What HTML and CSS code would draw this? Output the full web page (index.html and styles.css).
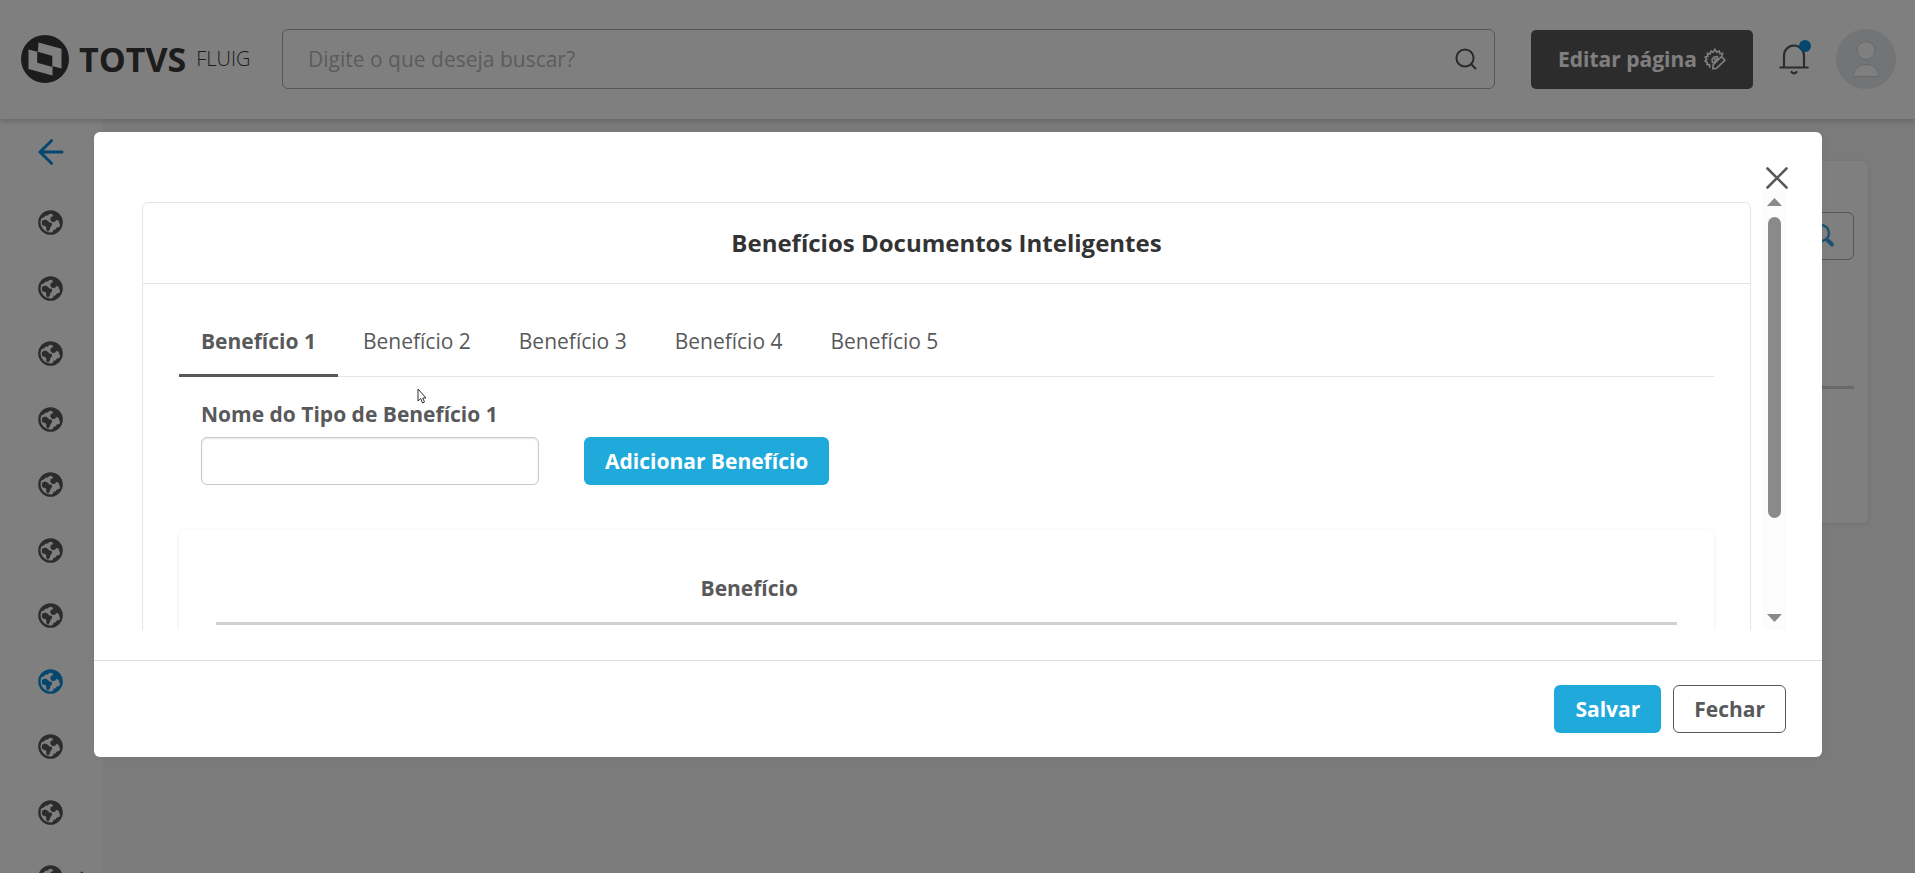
FILE: index.html
```html
<!DOCTYPE html>
<html lang="pt-BR">
<head>
<meta charset="utf-8">
<title>Benefícios Documentos Inteligentes</title>
<meta name="viewport" content="width=device-width, initial-scale=1">
<link rel="stylesheet" href="styles.css">
</head>
<body>
<svg class="symbols" aria-hidden="true">
  <symbol id="globe" viewBox="0 0 26 26">
    <circle cx="13" cy="13" r="11.6" fill="none" stroke="currentColor" stroke-width="2.400"/>
    <path fill="currentColor" d="M2.500 9 4.600 4.600 9 1.600l5-.6 5 1L22.500 5l2.300 4 .4 5-2 3-1-3.600-.8-2.300-2.400-.7-1.200 1.800-3.200.2-1.900-2.400.6-2.800 2.100-.8.2-1.200-2-1.200-1.800.2-1.600 1.500-2.600.3-1.200 1.500-2.100.9z"/>
    <path fill="currentColor" d="m4.200 11.200 3.200-1.200 3 1.100 1 1.700 3.200.8-.2 2.700-1.500 1.400-.4 2-2.200 3.300-1.800-2.700.2-2.400-1.600-1.400H5.200l-1.200-2zM14.800 24l1.500-3.400 2.200-.7 1-1.800 3.800-.8-2.700 4.500-2.800 2z"/>
  </symbol>
</svg>

<header class="topbar">
  <a class="brand" href="#">
    <svg class="brand-mark" viewBox="0 0 48 48" aria-hidden="true">
      <circle cx="24" cy="24" r="24" fill="#383838"/>
      <path fill="#fff" d="M17.500 7.600 40.500 13.800V33.600L32 31.300V20.600L17 16.200z"/>
      <path fill="#fff" d="M7.500 14.500 16.200 16.700V27.800L31.500 32V40.600L7.500 34z"/>
      <path fill="none" stroke="#fff" stroke-width="1" d="M16.500 16.200 31.800 20.500V31.800"/>
    </svg>
    <span class="brand-name">TOTVS</span>
    <span class="brand-product">FLUIG</span>
  </a>
  <form class="search">
    <input class="search-input" type="search" placeholder="Digite o que deseja buscar?" aria-label="Buscar">
    <button class="search-button" type="button" aria-label="Pesquisar">
      <svg width="22" height="22" viewBox="0 0 22 22" fill="none" stroke="currentColor" stroke-width="2" stroke-linecap="round"><circle cx="10" cy="10" r="8.600"/><path d="M16.200 16.200 20.500 20.500"/></svg>
    </button>
  </form>
  <button class="edit-button" type="button">Editar página
    <svg width="22" height="22" viewBox="0 0 22 22" fill="none" stroke="currentColor" stroke-width="1.600" stroke-linejoin="round" stroke-linecap="round" aria-hidden="true">
      <path d="M5.800 19.200 5.600 16.600 2.900 16.700 3.300 14.200 .9 13 2.900 11.200 1.200 9 3.900 8.300 3.300 5.400 6.200 5.900 6.900 3 9.200 4.400 11 1.200 12.700 4.300 15.400 2.900 15.800 5.800 18.800 5.300 18 7.600"/>
      <path d="M8.700 20.900 9.200 16.600 17.500 8.600 21 12.200 12.700 20.200zM13.500 8.500l-3.500.5-2 2.500.4 3 2-.5 3-3z"/>
      <circle cx="11.300" cy="11.300" r=".6"/>
    </svg>
  </button>
  <button class="bell" type="button" aria-label="Notificações">
    <svg width="30" height="32" viewBox="0 0 30 32" fill="none" stroke="currentColor" stroke-width="2.200" stroke-linecap="round" stroke-linejoin="round"><path d="M1.200 24.500H28.800M5 24.500V12.500a10 10 0 0 1 20 0V24.500M12.500 29q2.500 2.600 5 0"/></svg>
    <span class="bell-dot"></span>
  </button>
  <button class="avatar" type="button" aria-label="Perfil">
    <svg width="60" height="60" viewBox="0 0 60 60"><circle cx="30" cy="30" r="30" fill="#e4e8ec"/><g fill="#fff" stroke="#ccd0d4"><circle cx="30" cy="21.500" r="9"/><path d="M17.500 47.500c-1-16 26-16 25 0z"/></g></svg>
  </button>
</header>

<div class="shell">
  <nav class="sidebar" aria-label="Páginas">
    <a class="back" href="#" aria-label="Voltar"><svg width="26" height="26" viewBox="0 0 26 26" fill="none" stroke="currentColor" stroke-width="3" stroke-linecap="round" stroke-linejoin="round"><path d="M24 13H2M13.500 1.700 2 13 13.500 24.300"/></svg></a>
    <div class="pages">
      <a class="page" href="#" aria-label="Página 1"><svg><use href="#globe"/></svg></a>
      <a class="page" href="#" aria-label="Página 2"><svg><use href="#globe"/></svg></a>
      <a class="page" href="#" aria-label="Página 3"><svg><use href="#globe"/></svg></a>
      <a class="page" href="#" aria-label="Página 4"><svg><use href="#globe"/></svg></a>
      <a class="page" href="#" aria-label="Página 5"><svg><use href="#globe"/></svg></a>
      <a class="page" href="#" aria-label="Página 6"><svg><use href="#globe"/></svg></a>
      <a class="page" href="#" aria-label="Página 7"><svg><use href="#globe"/></svg></a>
      <a class="page active" href="#" aria-label="Página 8"><svg><use href="#globe"/></svg></a>
      <a class="page" href="#" aria-label="Página 9"><svg><use href="#globe"/></svg></a>
      <a class="page" href="#" aria-label="Página 10"><svg><use href="#globe"/></svg></a>
      <a class="page expandable" href="#" aria-label="Página 11"><svg><use href="#globe"/></svg><svg class="chevron" viewBox="0 0 8 14" fill="none" stroke="currentColor" stroke-width="2"><path d="M1 1l6 6-6 6"/></svg></a>
    </div>
  </nav>
  <main class="content">
    <section class="card">
      <div class="card-filter">
        <svg width="26" height="26" viewBox="0 0 26 26" fill="none" stroke="currentColor" stroke-linecap="round" aria-hidden="true"><circle cx="11" cy="10" r="8" stroke-width="2.400"/><path stroke-width="4" d="M18 17.500 22 21.500"/></svg>
      </div>
      <div class="card-rule"></div>
    </section>
  </main>
</div>

<div class="backdrop">
  <div class="modal" role="dialog" aria-modal="true" aria-labelledby="title">
    <div class="modal-head">
      <button class="close" type="button" aria-label="Fechar janela"><svg width="22" height="22" viewBox="0 0 22 22" fill="none" stroke="currentColor" stroke-width="2.600" stroke-linecap="round"><path d="M1.500 1.500 20.500 20.500M20.500 1.500 1.500 20.500"/></svg></button>
    </div>
    <div class="modal-body">
      <div class="scroll-view">
        <section class="panel">
          <h1 class="panel-title" id="title">Benefícios Documentos Inteligentes</h1>
          <div class="panel-body">
            <div class="tabs" role="tablist">
              <button class="tab selected" type="button" role="tab" aria-selected="true">Benefício 1</button>
              <button class="tab" type="button" role="tab">Benefício 2</button>
              <button class="tab" type="button" role="tab">Benefício 3</button>
              <button class="tab" type="button" role="tab">Benefício 4</button>
              <button class="tab" type="button" role="tab">Benefício 5</button>
            </div>
            <div class="form-row">
              <div class="field">
                <label for="nome">Nome do Tipo de Benefício 1</label>
                <input id="nome" type="text">
              </div>
              <button class="btn primary" type="button">Adicionar Benefício</button>
            </div>
            <div class="table-card">
              <table class="table">
                <thead><tr><th class="col-name" scope="col">Benefício</th><td></td></tr></thead>
                <tbody><tr><td colspan="2"></td></tr></tbody>
              </table>
            </div>
          </div>
        </section>
      </div>
      <div class="scrollbar" aria-hidden="true">
        <svg width="15" height="8" viewBox="0 0 15 8"><path fill="#8a8a8a" d="M7.500 0 15 8H0z"/></svg>
        <div class="track"><div class="thumb"></div></div>
        <svg width="15" height="8" viewBox="0 0 15 8"><path fill="#8a8a8a" d="M0 0h15L7.500 8z"/></svg>
      </div>
    </div>
    <div class="modal-foot">
      <button class="btn primary" type="button">Salvar</button>
      <button class="btn outline" type="button">Fechar</button>
    </div>
  </div>
</div>
<svg class="pointer" viewBox="0 0 10 16" aria-hidden="true"><path fill="#fff" stroke="#333" stroke-width="1" d="M1 1v12l2.700-2.500L5.500 15l2-1-1.800-4H9z"/></svg>
</body>
</html>
```
FILE: styles.css
```css
* { box-sizing: border-box; }

body {
  margin: 0;
  height: 100vh;
  overflow: hidden;
  display: flex;
  flex-direction: column;
  background: #f6f6f6;
  color: #58595b;
  font-family: "Open Sans", "Noto Sans", sans-serif;
  font-size: 21px;
  line-height: 28px;
}

button, input { font: inherit; color: inherit; }
button { cursor: pointer; }
svg { display: block; flex: none; }
.symbols { display: none; }

.topbar {
  display: flex;
  align-items: center;
  height: 119px;
  flex: none;
  padding: 0 19px 1px 21px;
  background: #fff;
  box-shadow: 0 2px 6px rgba(0, 0, 0, .2);
  z-index: 1;
}

.brand {
  display: flex;
  align-items: center;
  width: 261px;
  flex: none;
  color: #383838;
  text-decoration: none;
}
.brand-mark { width: 48px; height: 48px; }
.brand-name {
  margin-left: 10px;
  font-size: 34px;
  font-weight: 700;
}
.brand-product { margin-left: 10px; font-size: 20px; font-weight: 300; }

.search {
  display: flex;
  align-items: center;
  flex: 1;
  height: 60px;
  border: 1px solid #aaa;
  border-radius: 6px;
}
.search-input {
  flex: 1;
  height: 100%;
  padding: 0 25px;
  border: 0;
  background: none;
}
.search-input::placeholder { color: #b8b8b8; opacity: 1; }
.search-button {
  padding: 0 17px;
  border: 0;
  background: none;
  color: #555;
}

.edit-button {
  display: flex;
  align-items: center;
  justify-content: center;
  gap: 7px;
  width: 222px;
  height: 59px;
  margin-left: 36px;
  border: 0;
  border-radius: 5px;
  background: #58595b;
  color: #fff;
  font-weight: 700;
}

.bell {
  position: relative;
  margin: 0 27px 0 26px;
  padding: 0;
  border: 0;
  background: none;
  color: #58595b;
}
.bell-dot {
  position: absolute;
  top: -3px;
  right: -2px;
  width: 12px;
  height: 12px;
  border-radius: 50%;
  background: #0b8fdc;
}
.avatar { padding: 0; border: 0; background: none; }

.shell { display: flex; flex: 1; min-height: 0; }
.sidebar { width: 103px; flex: none; background: #fff; }
.back { display: block; padding: 20px 0 0 38px; color: #0b8fdc; }
.pages {
  display: flex;
  flex-direction: column;
  justify-content: space-between;
  height: 680px;
  margin-top: 45px;
  padding-left: 38px;
}
.page { display: flex; align-items: center; height: 25px; color: #58595b; }
.page svg { width: 25px; height: 25px; }
.page.active { color: #0b8fdc; }
.page.expandable { gap: 17px; }
.page .chevron { width: 8px; height: 14px; }

.content { flex: 1; padding: 42px 47px 0 40px; }
.card {
  padding: 51px 14px 134px;
  border-radius: 6px;
  background: #fff;
  box-shadow: 0 1px 4px rgba(0, 0, 0, .1);
}
.card-filter {
  display: flex;
  align-items: center;
  justify-content: flex-end;
  height: 48px;
  padding-right: 17px;
  border: 1px solid #aaa;
  border-radius: 6px;
  color: #3ba5d8;
}
.card-rule { height: 3px; margin-top: 126px; background: #d0d0d0; }

.backdrop {
  position: absolute;
  inset: 0;
  z-index: 2;
  padding: 132px 93px 0 94px;
  background: rgba(0, 0, 0, .5);
}
.modal { border-radius: 6px; background: #fff; box-shadow: 0 0 10px rgba(0, 0, 0, .05); }
.modal-head {
  display: flex;
  justify-content: flex-end;
  height: 58px;
  padding: 35px 34px 0;
}
.close { height: 22px; padding: 0; border: 0; background: none; color: #58595b; }

.modal-body { display: flex; height: 440px; padding: 0 36px 0 48px; }
.scroll-view { flex: 1; padding: 12px 12px 0 0; overflow: hidden; }
.scrollbar {
  display: flex;
  flex-direction: column;
  align-items: center;
  width: 23px;
  padding: 8px 0;
  background: #fcfcfc;
}
.track { flex: 1; padding: 11px 0; }
.thumb { width: 13px; height: 301px; border-radius: 7px; background: #8a8a8a; }

.panel { border: 1px solid #e5e5e5; border-radius: 6px; }
.panel-title {
  margin: 0;
  padding: 26px 0;
  border-bottom: 1px solid #e5e5e5;
  color: #333;
  font-size: 24px;
  font-weight: 700;
  line-height: 28px;
  text-align: center;
}
.panel-body { padding: 24px 36px; }
.tabs { display: flex; gap: 2px; border-bottom: 1px solid #e5e5e5; }
.tab {
  height: 69px;
  padding: 0 23px;
  border: 0;
  margin-bottom: -1px;
  border-bottom: 3px solid transparent;
  background: none;
}
.tab.selected { padding: 0 22px; border-color: #58595b; font-weight: 700; }

.form-row { display: flex; align-items: flex-end; gap: 45px; padding: 23px 22px 0; }
.field { display: flex; flex-direction: column; gap: 9px; }
.field label { font-weight: 700; }
.field input {
  width: 338px;
  height: 48px;
  padding: 0 12px;
  border: 1px solid #c8c8c8;
  border-radius: 6px;
  background: #fff;
  box-shadow: inset 0 1px 2px rgba(0, 0, 0, .1);
}
.btn {
  height: 48px;
  padding: 0 20px 1px;
  border: 1px solid transparent;
  border-radius: 6px;
  font-weight: 700;
}
.primary { background: #1faadb; color: #fff; }
.outline { border-color: #58595b; background: #fff; }

.table-card {
  height: 300px;
  margin-top: 44px;
  padding: 34px 37px;
  border-radius: 6px;
  box-shadow: 0 1px 3px rgba(0, 0, 0, .12);
}
.table { width: 100%; border-collapse: collapse; }
.table thead tr { border-bottom: 3px solid #d0d0d0; }
.table th { height: 60px; padding: 0 0 9px; font-weight: 700; }
.col-name { width: 73%; }

.modal-foot {
  display: flex;
  justify-content: flex-end;
  gap: 12px;
  margin-top: 30px;
  padding: 24px 36px;
  border-top: 1px solid #ddd;
}

.pointer { position: absolute; z-index: 3; left: 417px; top: 388px; width: 10px; height: 16px; }
```
